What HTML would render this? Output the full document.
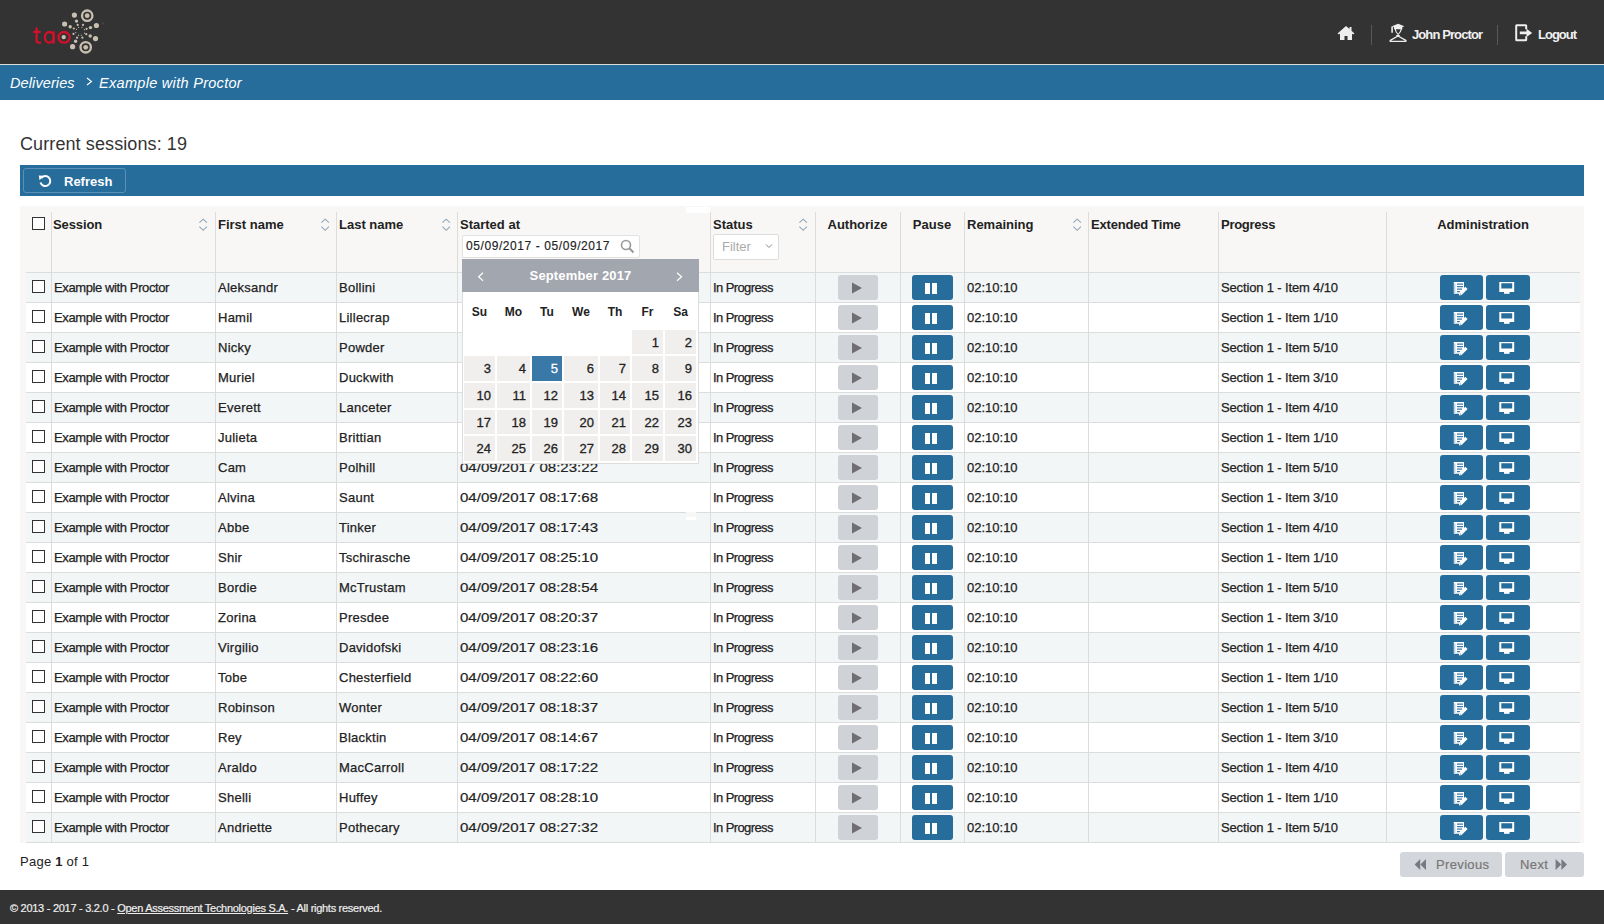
<!DOCTYPE html><html><head><meta charset="utf-8"><title>TAO Proctoring</title><style>
*{margin:0;padding:0;box-sizing:border-box}
html,body{width:1604px;height:924px;overflow:hidden;background:#fff;font-family:"Liberation Sans",sans-serif;color:#222}
.a{position:absolute}
.t{position:absolute;white-space:nowrap;font-size:13px;line-height:15px}
.sk{-webkit-text-stroke:0.25px #222}
.hdr{left:0;top:0;width:1604px;height:64px;background:#333}
.hline{left:0;top:64px;width:1604px;height:1px;background:#dcdcdc}
.bc{left:0;top:65px;width:1604px;height:35px;background:#266d9c}
.bct{color:#fff;font-style:italic;font-size:14.5px;line-height:17px}
.nav{color:#f0f0f0;font-weight:bold;font-size:13px;line-height:15px}
.vsep{width:1px;background:#5e5850}
.tbar{left:20px;top:165px;width:1564px;height:31px;background:#266d9c}
.rbtn{left:23px;top:168px;width:103px;height:25px;border:1px solid #5b8fb8;border-radius:3px}
.wrap{left:20px;top:206px;width:1564px;height:637px;background:#f8f7f5}
.row{left:26px;width:1554px;height:31px;border-top:1px solid #dcdcdc;border-bottom:1px solid #dcdcdc}
.odd{background:#f3f6f7}
.even{background:#fff}
.vl{width:1px;background:#dcdcdc}
.cb{width:13px;height:13px;border:1.5px solid #333;background:#fff}
.hd{font-weight:bold;font-size:13px;line-height:15px;color:#222}
.pbtn{width:40px;height:25px;background:#cfd2d6;border-radius:3px}
.pzbtn{width:41px;height:25px;background:#266d9c;border-radius:3px}
.abtn{height:25px;background:#266d9c;border-radius:3px}
.ftr{left:0;top:890px;width:1604px;height:34px;background:#333}
</style></head><body>
<div class="a hdr"></div><div class="a hline"></div><div class="a bc"></div>
<svg class="a" style="left:25px;top:5px" width="90" height="56" viewBox="25 5 90 56"><g fill="none" stroke="#d0112b" stroke-width="2.3"><path d="M36.6 27.6 V40.6 Q36.6 42.6 38.6 42.6 H41"/><path d="M33.3 31.9 H40.8"/><ellipse cx="49.3" cy="37.3" rx="4.4" ry="5.3"/><path d="M53.7 31.2 V43.7"/><ellipse cx="64.1" cy="37.3" rx="5.6" ry="5.3"/></g><circle cx="74.4" cy="15.1" r="2.6" fill="#c8bfb1"/><circle cx="64.6" cy="24" r="2.6" fill="#c8bfb1"/><circle cx="96.4" cy="25.5" r="2.6" fill="#c8bfb1"/><circle cx="95.5" cy="38.6" r="2.6" fill="#c8bfb1"/><circle cx="72.6" cy="46.7" r="2.6" fill="#c8bfb1"/><circle cx="76.5" cy="21.1" r="1.7" fill="#c8bfb1"/><circle cx="70.2" cy="26.7" r="1.7" fill="#c8bfb1"/><circle cx="90.5" cy="27.6" r="1.7" fill="#c8bfb1"/><circle cx="90.2" cy="36" r="1.7" fill="#c8bfb1"/><circle cx="75.6" cy="41.3" r="1.7" fill="#c8bfb1"/><circle cx="77.7" cy="24.9" r="1.1" fill="#c8bfb1"/><circle cx="83" cy="24.9" r="1.1" fill="#c8bfb1"/><circle cx="73.8" cy="28.5" r="1.1" fill="#c8bfb1"/><circle cx="86.6" cy="28.8" r="1.1" fill="#c8bfb1"/><circle cx="73.5" cy="33.9" r="1.1" fill="#c8bfb1"/><circle cx="86.3" cy="34.2" r="1.1" fill="#c8bfb1"/><circle cx="77.1" cy="37.7" r="1.1" fill="#c8bfb1"/><circle cx="82.4" cy="37.7" r="1.1" fill="#c8bfb1"/><circle cx="78.6" cy="27.3" r="0.6" fill="#c8bfb1"/><circle cx="82" cy="27.3" r="0.6" fill="#c8bfb1"/><circle cx="76.5" cy="29.3" r="0.6" fill="#c8bfb1"/><circle cx="84.5" cy="29.7" r="0.6" fill="#c8bfb1"/><circle cx="75.8" cy="32.6" r="0.6" fill="#c8bfb1"/><circle cx="84.5" cy="33.2" r="0.6" fill="#c8bfb1"/><circle cx="78.6" cy="35.2" r="0.6" fill="#c8bfb1"/><circle cx="81.3" cy="35.2" r="0.6" fill="#c8bfb1"/><circle cx="87.2" cy="15.7" r="5.2" fill="none" stroke="#c8bfb1" stroke-width="2.3"/><circle cx="87.2" cy="15.7" r="2.4" fill="#c8bfb1"/><circle cx="85.7" cy="47.3" r="5.2" fill="none" stroke="#c8bfb1" stroke-width="2.3"/><circle cx="85.7" cy="47.3" r="2.4" fill="#c8bfb1"/><circle cx="63.7" cy="37.1" r="2.2" fill="#c8bfb1"/><text x="101.5" y="25" fill="#6a6560" font-size="4" font-family="Liberation Sans">®</text></svg>
<svg class="a" style="left:1337px;top:25px" width="18" height="16" viewBox="0 0 18 16"><path d="M9 1 L0.5 8.5 L2 9.5 L3 8.6 V15 H7.5 V11 H10.5 V15 H15 V8.6 L16 9.5 L17.5 8.5 L14.5 5.8 V2 H12.5 V4 Z" fill="#eee"/></svg>
<div class="a vsep" style="left:1371px;top:25px;height:20px"></div>
<svg class="a" style="left:1385px;top:20px" width="27" height="26" viewBox="0 0 27 26"><path d="M6.8 6.2 L13.2 3.8 L19.3 6.2 L17.3 7.3 V9.3 H9 V7.3 Z" fill="#eee"/><path d="M7.1 6.5 V12.7" stroke="#eee" stroke-width="1.6"/><path d="M10.2 8.8 Q10.6 12.4 13.1 14.4 Q15.6 12.4 16.4 8.8" fill="none" stroke="#eee" stroke-width="1.2"/><path d="M11.2 15.5 H14.8" stroke="#eee" stroke-width="1"/><path d="M13 16 L5.3 20.4 Q4.5 21.3 5.6 21.4 H20.5 Q21.6 21.3 20.8 20.4 L13 16" fill="none" stroke="#eee" stroke-width="1.3" stroke-linejoin="round"/></svg>
<div class="t nav" style="left:1412px;top:27px;letter-spacing:-0.9px">John Proctor</div>
<div class="a vsep" style="left:1497px;top:25px;height:20px"></div>
<svg class="a" style="left:1515px;top:24px" width="18" height="18" viewBox="0 0 18 18"><path d="M11.2 5.2 V1.7 Q11.2 1.2 10.7 1.2 H1.7 Q1.2 1.2 1.2 1.7 V15.7 Q1.2 16.2 1.7 16.2 H10.7 Q11.2 16.2 11.2 15.7 V12.2" fill="none" stroke="#eee" stroke-width="2"/><path d="M4.8 7.6 H11.5 V4.8 L17.2 8.9 L11.5 13 V10.2 H4.8 Z" fill="#eee"/></svg>
<div class="t nav" style="left:1538px;top:27px;letter-spacing:-1px">Logout</div>
<div class="t bct" style="left:10px;top:75px;letter-spacing:0.1px">Deliveries</div>
<svg class="a" style="left:85px;top:77px" width="9" height="9" viewBox="0 0 9 9"><path d="M2 1 L6.5 4.5 L2 8" fill="none" stroke="#fff" stroke-width="1.1"/></svg>
<div class="t bct" style="left:99px;top:75px;letter-spacing:0.3px">Example with Proctor</div>
<div class="t" style="left:20px;top:134px;letter-spacing:0.1px;font-size:18px;line-height:21px;color:#333">Current sessions: 19</div>
<div class="a tbar"></div><div class="a rbtn"></div>
<svg class="a" style="left:38px;top:174px" width="14" height="14" viewBox="0 0 14 14"><path d="M3.2 4.2 A5 5 0 1 1 2.5 8.5" fill="none" stroke="#fff" stroke-width="2"/><path d="M0.8 1.5 L5.6 1.8 L1.5 6.2 Z" fill="#fff"/></svg>
<div class="t" style="left:64px;top:174px;font-weight:bold;color:#fff">Refresh</div>
<div class="a wrap"></div>
<div class="a vl" style="left:51px;top:212px;height:60px"></div>
<div class="a vl" style="left:215px;top:212px;height:60px"></div>
<div class="a vl" style="left:336px;top:212px;height:60px"></div>
<div class="a vl" style="left:457px;top:212px;height:60px"></div>
<div class="a vl" style="left:710px;top:212px;height:60px"></div>
<div class="a vl" style="left:815px;top:212px;height:60px"></div>
<div class="a vl" style="left:900px;top:212px;height:60px"></div>
<div class="a vl" style="left:964px;top:212px;height:60px"></div>
<div class="a vl" style="left:1088px;top:212px;height:60px"></div>
<div class="a vl" style="left:1218px;top:212px;height:60px"></div>
<div class="a vl" style="left:1386px;top:212px;height:60px"></div>
<div class="a cb" style="left:32px;top:217px"></div>
<div class="t hd" style="left:53px;top:217px;letter-spacing:-0.1px">Session</div>
<svg class="a" style="left:197px;top:218px" width="12" height="14" viewBox="0 0 12 14"><path d="M2.4 4.6 L6.2 1.1 L9.9 4.6 M2.4 8.6 L6.2 12.3 L9.9 8.6" fill="none" stroke="#8ea3b6" stroke-width="1.05"/></svg>
<div class="t hd" style="left:218px;top:217px;letter-spacing:0px">First name</div>
<svg class="a" style="left:319px;top:218px" width="12" height="14" viewBox="0 0 12 14"><path d="M2.4 4.6 L6.2 1.1 L9.9 4.6 M2.4 8.6 L6.2 12.3 L9.9 8.6" fill="none" stroke="#8ea3b6" stroke-width="1.05"/></svg>
<div class="t hd" style="left:339px;top:217px;letter-spacing:0px">Last name</div>
<svg class="a" style="left:440px;top:218px" width="12" height="14" viewBox="0 0 12 14"><path d="M2.4 4.6 L6.2 1.1 L9.9 4.6 M2.4 8.6 L6.2 12.3 L9.9 8.6" fill="none" stroke="#8ea3b6" stroke-width="1.05"/></svg>
<div class="t hd" style="left:460px;top:217px;letter-spacing:0px">Started at</div>
<div class="t hd" style="left:713px;top:217px;letter-spacing:0px">Status</div>
<svg class="a" style="left:797px;top:218px" width="12" height="14" viewBox="0 0 12 14"><path d="M2.4 4.6 L6.2 1.1 L9.9 4.6 M2.4 8.6 L6.2 12.3 L9.9 8.6" fill="none" stroke="#8ea3b6" stroke-width="1.05"/></svg>
<div class="t hd" style="left:815px;width:85px;text-align:center;top:217px">Authorize</div>
<div class="t hd" style="left:900px;width:64px;text-align:center;top:217px">Pause</div>
<div class="t hd" style="left:967px;top:217px;letter-spacing:0px">Remaining</div>
<svg class="a" style="left:1071px;top:218px" width="12" height="14" viewBox="0 0 12 14"><path d="M2.4 4.6 L6.2 1.1 L9.9 4.6 M2.4 8.6 L6.2 12.3 L9.9 8.6" fill="none" stroke="#8ea3b6" stroke-width="1.05"/></svg>
<div class="t hd" style="left:1091px;top:217px;letter-spacing:-0.2px">Extended Time</div>
<div class="t hd" style="left:1221px;top:217px;letter-spacing:-0.28px">Progress</div>
<div class="t hd" style="left:1386px;width:194px;text-align:center;top:217px">Administration</div>
<div class="a" style="left:462px;top:235px;width:178px;height:23px;background:#fff;border:1px solid #e2e2e2;border-radius:2px"></div>
<div class="t" style="left:466px;top:239px;font-size:12px;line-height:14px;letter-spacing:0.58px;-webkit-text-stroke:0.15px #222">05/09/2017 - 05/09/2017</div>
<svg class="a" style="left:620px;top:239px" width="15" height="15" viewBox="0 0 15 15"><circle cx="6" cy="6" r="4.5" fill="none" stroke="#999" stroke-width="1.6"/><path d="M9.3 9.3 L13.5 13.5" stroke="#999" stroke-width="2"/></svg>
<div class="a" style="left:713px;top:234px;width:66px;height:26px;background:#fff;border:1px solid #ddd;border-radius:2px"></div>
<div class="t" style="left:722px;top:239px;color:#aaa;font-size:13px">Filter</div>
<svg class="a" style="left:765px;top:243px" width="8" height="6" viewBox="0 0 8 6"><path d="M1 1.5 L4 4.5 L7 1.5" fill="none" stroke="#888" stroke-width="1"/></svg>
<div class="a row odd" style="top:272px"></div>
<div class="a row even" style="top:302px"></div>
<div class="a row odd" style="top:332px"></div>
<div class="a row even" style="top:362px"></div>
<div class="a row odd" style="top:392px"></div>
<div class="a row even" style="top:422px"></div>
<div class="a row odd" style="top:452px"></div>
<div class="a row even" style="top:482px"></div>
<div class="a row odd" style="top:512px"></div>
<div class="a row even" style="top:542px"></div>
<div class="a row odd" style="top:572px"></div>
<div class="a row even" style="top:602px"></div>
<div class="a row odd" style="top:632px"></div>
<div class="a row even" style="top:662px"></div>
<div class="a row odd" style="top:692px"></div>
<div class="a row even" style="top:722px"></div>
<div class="a row odd" style="top:752px"></div>
<div class="a row even" style="top:782px"></div>
<div class="a row odd" style="top:812px"></div>
<div class="a vl" style="left:51px;top:272px;height:571px"></div>
<div class="a vl" style="left:215px;top:272px;height:571px"></div>
<div class="a vl" style="left:336px;top:272px;height:571px"></div>
<div class="a vl" style="left:457px;top:272px;height:571px"></div>
<div class="a vl" style="left:710px;top:272px;height:571px"></div>
<div class="a vl" style="left:815px;top:272px;height:571px"></div>
<div class="a vl" style="left:900px;top:272px;height:571px"></div>
<div class="a vl" style="left:964px;top:272px;height:571px"></div>
<div class="a vl" style="left:1088px;top:272px;height:571px"></div>
<div class="a vl" style="left:1218px;top:272px;height:571px"></div>
<div class="a vl" style="left:1386px;top:272px;height:571px"></div>
<div class="a cb" style="left:32px;top:280px"></div>
<div class="t sk" style="left:54px;top:280px;letter-spacing:-0.39px">Example with Proctor</div>
<div class="t sk" style="left:218px;top:280px;letter-spacing:0.25px">Aleksandr</div>
<div class="t sk" style="left:339px;top:280px;letter-spacing:0.25px">Bollini</div>
<div class="t sk" style="left:713px;top:280px;letter-spacing:-0.6px">In Progress</div>
<div class="a pbtn" style="left:838px;top:275px"></div>
<svg class="a" style="left:851px;top:282px" width="12" height="12" viewBox="0 0 12 12"><path d="M1 0.5 L11 6 L1 11.5Z" fill="#6f6f73"/></svg>
<div class="a pzbtn" style="left:912px;top:275px"></div>
<div class="a" style="left:925px;top:283px;width:5px;height:11px;background:#fff"></div><div class="a" style="left:932px;top:283px;width:5px;height:11px;background:#fff"></div>
<div class="t sk" style="left:967px;top:280px">02:10:10</div>
<div class="t sk" style="left:1221px;top:280px;letter-spacing:-0.15px">Section 1 - Item 4/10</div>
<div class="a abtn" style="left:1440px;top:275px;width:43px"></div>
<svg class="a" style="left:1453px;top:282px" width="16" height="14" viewBox="0 0 16 14"><path d="M0.8 0 H11 V6.5 L7 11.8 H0.8Z" fill="#fff"/><path d="M4 2.2 H10 M4 4.7 H10 M4 7.2 H9 M4 9.7 H7" stroke="#3f7cab" stroke-width="1.2"/><path d="M1.8 1.5 V11" stroke="#8fb2cf" stroke-width="0.8"/><path d="M6.3 10.8 L12.3 4.8 L14.6 7.1 L8.6 13.1 L6 13.6Z" fill="#fff"/><circle cx="7.6" cy="12" r="0.6" fill="#5d8db3"/></svg>
<div class="a abtn" style="left:1486px;top:275px;width:44px"></div>
<svg class="a" style="left:1499px;top:282px" width="16" height="13" viewBox="0 0 16 13"><path d="M0.3 0 H15.2 V10 H0.3 Z M2.3 1.3 V6.4 H13.2 V1.3Z" fill="#fff" fill-rule="evenodd"/><path d="M5 10 H10.6 V11.8 H5Z" fill="#fff"/></svg>
<div class="a cb" style="left:32px;top:310px"></div>
<div class="t sk" style="left:54px;top:310px;letter-spacing:-0.39px">Example with Proctor</div>
<div class="t sk" style="left:218px;top:310px;letter-spacing:0.25px">Hamil</div>
<div class="t sk" style="left:339px;top:310px;letter-spacing:0.25px">Lillecrap</div>
<div class="t sk" style="left:713px;top:310px;letter-spacing:-0.6px">In Progress</div>
<div class="a pbtn" style="left:838px;top:305px"></div>
<svg class="a" style="left:851px;top:312px" width="12" height="12" viewBox="0 0 12 12"><path d="M1 0.5 L11 6 L1 11.5Z" fill="#6f6f73"/></svg>
<div class="a pzbtn" style="left:912px;top:305px"></div>
<div class="a" style="left:925px;top:313px;width:5px;height:11px;background:#fff"></div><div class="a" style="left:932px;top:313px;width:5px;height:11px;background:#fff"></div>
<div class="t sk" style="left:967px;top:310px">02:10:10</div>
<div class="t sk" style="left:1221px;top:310px;letter-spacing:-0.15px">Section 1 - Item 1/10</div>
<div class="a abtn" style="left:1440px;top:305px;width:43px"></div>
<svg class="a" style="left:1453px;top:312px" width="16" height="14" viewBox="0 0 16 14"><path d="M0.8 0 H11 V6.5 L7 11.8 H0.8Z" fill="#fff"/><path d="M4 2.2 H10 M4 4.7 H10 M4 7.2 H9 M4 9.7 H7" stroke="#3f7cab" stroke-width="1.2"/><path d="M1.8 1.5 V11" stroke="#8fb2cf" stroke-width="0.8"/><path d="M6.3 10.8 L12.3 4.8 L14.6 7.1 L8.6 13.1 L6 13.6Z" fill="#fff"/><circle cx="7.6" cy="12" r="0.6" fill="#5d8db3"/></svg>
<div class="a abtn" style="left:1486px;top:305px;width:44px"></div>
<svg class="a" style="left:1499px;top:312px" width="16" height="13" viewBox="0 0 16 13"><path d="M0.3 0 H15.2 V10 H0.3 Z M2.3 1.3 V6.4 H13.2 V1.3Z" fill="#fff" fill-rule="evenodd"/><path d="M5 10 H10.6 V11.8 H5Z" fill="#fff"/></svg>
<div class="a cb" style="left:32px;top:340px"></div>
<div class="t sk" style="left:54px;top:340px;letter-spacing:-0.39px">Example with Proctor</div>
<div class="t sk" style="left:218px;top:340px;letter-spacing:0.25px">Nicky</div>
<div class="t sk" style="left:339px;top:340px;letter-spacing:0.25px">Powder</div>
<div class="t sk" style="left:713px;top:340px;letter-spacing:-0.6px">In Progress</div>
<div class="a pbtn" style="left:838px;top:335px"></div>
<svg class="a" style="left:851px;top:342px" width="12" height="12" viewBox="0 0 12 12"><path d="M1 0.5 L11 6 L1 11.5Z" fill="#6f6f73"/></svg>
<div class="a pzbtn" style="left:912px;top:335px"></div>
<div class="a" style="left:925px;top:343px;width:5px;height:11px;background:#fff"></div><div class="a" style="left:932px;top:343px;width:5px;height:11px;background:#fff"></div>
<div class="t sk" style="left:967px;top:340px">02:10:10</div>
<div class="t sk" style="left:1221px;top:340px;letter-spacing:-0.15px">Section 1 - Item 5/10</div>
<div class="a abtn" style="left:1440px;top:335px;width:43px"></div>
<svg class="a" style="left:1453px;top:342px" width="16" height="14" viewBox="0 0 16 14"><path d="M0.8 0 H11 V6.5 L7 11.8 H0.8Z" fill="#fff"/><path d="M4 2.2 H10 M4 4.7 H10 M4 7.2 H9 M4 9.7 H7" stroke="#3f7cab" stroke-width="1.2"/><path d="M1.8 1.5 V11" stroke="#8fb2cf" stroke-width="0.8"/><path d="M6.3 10.8 L12.3 4.8 L14.6 7.1 L8.6 13.1 L6 13.6Z" fill="#fff"/><circle cx="7.6" cy="12" r="0.6" fill="#5d8db3"/></svg>
<div class="a abtn" style="left:1486px;top:335px;width:44px"></div>
<svg class="a" style="left:1499px;top:342px" width="16" height="13" viewBox="0 0 16 13"><path d="M0.3 0 H15.2 V10 H0.3 Z M2.3 1.3 V6.4 H13.2 V1.3Z" fill="#fff" fill-rule="evenodd"/><path d="M5 10 H10.6 V11.8 H5Z" fill="#fff"/></svg>
<div class="a cb" style="left:32px;top:370px"></div>
<div class="t sk" style="left:54px;top:370px;letter-spacing:-0.39px">Example with Proctor</div>
<div class="t sk" style="left:218px;top:370px;letter-spacing:0.25px">Muriel</div>
<div class="t sk" style="left:339px;top:370px;letter-spacing:0.25px">Duckwith</div>
<div class="t sk" style="left:713px;top:370px;letter-spacing:-0.6px">In Progress</div>
<div class="a pbtn" style="left:838px;top:365px"></div>
<svg class="a" style="left:851px;top:372px" width="12" height="12" viewBox="0 0 12 12"><path d="M1 0.5 L11 6 L1 11.5Z" fill="#6f6f73"/></svg>
<div class="a pzbtn" style="left:912px;top:365px"></div>
<div class="a" style="left:925px;top:373px;width:5px;height:11px;background:#fff"></div><div class="a" style="left:932px;top:373px;width:5px;height:11px;background:#fff"></div>
<div class="t sk" style="left:967px;top:370px">02:10:10</div>
<div class="t sk" style="left:1221px;top:370px;letter-spacing:-0.15px">Section 1 - Item 3/10</div>
<div class="a abtn" style="left:1440px;top:365px;width:43px"></div>
<svg class="a" style="left:1453px;top:372px" width="16" height="14" viewBox="0 0 16 14"><path d="M0.8 0 H11 V6.5 L7 11.8 H0.8Z" fill="#fff"/><path d="M4 2.2 H10 M4 4.7 H10 M4 7.2 H9 M4 9.7 H7" stroke="#3f7cab" stroke-width="1.2"/><path d="M1.8 1.5 V11" stroke="#8fb2cf" stroke-width="0.8"/><path d="M6.3 10.8 L12.3 4.8 L14.6 7.1 L8.6 13.1 L6 13.6Z" fill="#fff"/><circle cx="7.6" cy="12" r="0.6" fill="#5d8db3"/></svg>
<div class="a abtn" style="left:1486px;top:365px;width:44px"></div>
<svg class="a" style="left:1499px;top:372px" width="16" height="13" viewBox="0 0 16 13"><path d="M0.3 0 H15.2 V10 H0.3 Z M2.3 1.3 V6.4 H13.2 V1.3Z" fill="#fff" fill-rule="evenodd"/><path d="M5 10 H10.6 V11.8 H5Z" fill="#fff"/></svg>
<div class="a cb" style="left:32px;top:400px"></div>
<div class="t sk" style="left:54px;top:400px;letter-spacing:-0.39px">Example with Proctor</div>
<div class="t sk" style="left:218px;top:400px;letter-spacing:0.25px">Everett</div>
<div class="t sk" style="left:339px;top:400px;letter-spacing:0.25px">Lanceter</div>
<div class="t sk" style="left:713px;top:400px;letter-spacing:-0.6px">In Progress</div>
<div class="a pbtn" style="left:838px;top:395px"></div>
<svg class="a" style="left:851px;top:402px" width="12" height="12" viewBox="0 0 12 12"><path d="M1 0.5 L11 6 L1 11.5Z" fill="#6f6f73"/></svg>
<div class="a pzbtn" style="left:912px;top:395px"></div>
<div class="a" style="left:925px;top:403px;width:5px;height:11px;background:#fff"></div><div class="a" style="left:932px;top:403px;width:5px;height:11px;background:#fff"></div>
<div class="t sk" style="left:967px;top:400px">02:10:10</div>
<div class="t sk" style="left:1221px;top:400px;letter-spacing:-0.15px">Section 1 - Item 4/10</div>
<div class="a abtn" style="left:1440px;top:395px;width:43px"></div>
<svg class="a" style="left:1453px;top:402px" width="16" height="14" viewBox="0 0 16 14"><path d="M0.8 0 H11 V6.5 L7 11.8 H0.8Z" fill="#fff"/><path d="M4 2.2 H10 M4 4.7 H10 M4 7.2 H9 M4 9.7 H7" stroke="#3f7cab" stroke-width="1.2"/><path d="M1.8 1.5 V11" stroke="#8fb2cf" stroke-width="0.8"/><path d="M6.3 10.8 L12.3 4.8 L14.6 7.1 L8.6 13.1 L6 13.6Z" fill="#fff"/><circle cx="7.6" cy="12" r="0.6" fill="#5d8db3"/></svg>
<div class="a abtn" style="left:1486px;top:395px;width:44px"></div>
<svg class="a" style="left:1499px;top:402px" width="16" height="13" viewBox="0 0 16 13"><path d="M0.3 0 H15.2 V10 H0.3 Z M2.3 1.3 V6.4 H13.2 V1.3Z" fill="#fff" fill-rule="evenodd"/><path d="M5 10 H10.6 V11.8 H5Z" fill="#fff"/></svg>
<div class="a cb" style="left:32px;top:430px"></div>
<div class="t sk" style="left:54px;top:430px;letter-spacing:-0.39px">Example with Proctor</div>
<div class="t sk" style="left:218px;top:430px;letter-spacing:0.25px">Julieta</div>
<div class="t sk" style="left:339px;top:430px;letter-spacing:0.25px">Brittian</div>
<div class="t sk" style="left:713px;top:430px;letter-spacing:-0.6px">In Progress</div>
<div class="a pbtn" style="left:838px;top:425px"></div>
<svg class="a" style="left:851px;top:432px" width="12" height="12" viewBox="0 0 12 12"><path d="M1 0.5 L11 6 L1 11.5Z" fill="#6f6f73"/></svg>
<div class="a pzbtn" style="left:912px;top:425px"></div>
<div class="a" style="left:925px;top:433px;width:5px;height:11px;background:#fff"></div><div class="a" style="left:932px;top:433px;width:5px;height:11px;background:#fff"></div>
<div class="t sk" style="left:967px;top:430px">02:10:10</div>
<div class="t sk" style="left:1221px;top:430px;letter-spacing:-0.15px">Section 1 - Item 1/10</div>
<div class="a abtn" style="left:1440px;top:425px;width:43px"></div>
<svg class="a" style="left:1453px;top:432px" width="16" height="14" viewBox="0 0 16 14"><path d="M0.8 0 H11 V6.5 L7 11.8 H0.8Z" fill="#fff"/><path d="M4 2.2 H10 M4 4.7 H10 M4 7.2 H9 M4 9.7 H7" stroke="#3f7cab" stroke-width="1.2"/><path d="M1.8 1.5 V11" stroke="#8fb2cf" stroke-width="0.8"/><path d="M6.3 10.8 L12.3 4.8 L14.6 7.1 L8.6 13.1 L6 13.6Z" fill="#fff"/><circle cx="7.6" cy="12" r="0.6" fill="#5d8db3"/></svg>
<div class="a abtn" style="left:1486px;top:425px;width:44px"></div>
<svg class="a" style="left:1499px;top:432px" width="16" height="13" viewBox="0 0 16 13"><path d="M0.3 0 H15.2 V10 H0.3 Z M2.3 1.3 V6.4 H13.2 V1.3Z" fill="#fff" fill-rule="evenodd"/><path d="M5 10 H10.6 V11.8 H5Z" fill="#fff"/></svg>
<div class="a cb" style="left:32px;top:460px"></div>
<div class="t sk" style="left:54px;top:460px;letter-spacing:-0.39px">Example with Proctor</div>
<div class="t sk" style="left:218px;top:460px;letter-spacing:0.25px">Cam</div>
<div class="t sk" style="left:339px;top:460px;letter-spacing:0.25px">Polhill</div>
<div class="t" style="left:460px;top:460px;transform:scaleX(1.157);transform-origin:0 0;-webkit-text-stroke:0.2px #222">04/09/2017 08:23:22</div>
<div class="t sk" style="left:713px;top:460px;letter-spacing:-0.6px">In Progress</div>
<div class="a pbtn" style="left:838px;top:455px"></div>
<svg class="a" style="left:851px;top:462px" width="12" height="12" viewBox="0 0 12 12"><path d="M1 0.5 L11 6 L1 11.5Z" fill="#6f6f73"/></svg>
<div class="a pzbtn" style="left:912px;top:455px"></div>
<div class="a" style="left:925px;top:463px;width:5px;height:11px;background:#fff"></div><div class="a" style="left:932px;top:463px;width:5px;height:11px;background:#fff"></div>
<div class="t sk" style="left:967px;top:460px">02:10:10</div>
<div class="t sk" style="left:1221px;top:460px;letter-spacing:-0.15px">Section 1 - Item 5/10</div>
<div class="a abtn" style="left:1440px;top:455px;width:43px"></div>
<svg class="a" style="left:1453px;top:462px" width="16" height="14" viewBox="0 0 16 14"><path d="M0.8 0 H11 V6.5 L7 11.8 H0.8Z" fill="#fff"/><path d="M4 2.2 H10 M4 4.7 H10 M4 7.2 H9 M4 9.7 H7" stroke="#3f7cab" stroke-width="1.2"/><path d="M1.8 1.5 V11" stroke="#8fb2cf" stroke-width="0.8"/><path d="M6.3 10.8 L12.3 4.8 L14.6 7.1 L8.6 13.1 L6 13.6Z" fill="#fff"/><circle cx="7.6" cy="12" r="0.6" fill="#5d8db3"/></svg>
<div class="a abtn" style="left:1486px;top:455px;width:44px"></div>
<svg class="a" style="left:1499px;top:462px" width="16" height="13" viewBox="0 0 16 13"><path d="M0.3 0 H15.2 V10 H0.3 Z M2.3 1.3 V6.4 H13.2 V1.3Z" fill="#fff" fill-rule="evenodd"/><path d="M5 10 H10.6 V11.8 H5Z" fill="#fff"/></svg>
<div class="a cb" style="left:32px;top:490px"></div>
<div class="t sk" style="left:54px;top:490px;letter-spacing:-0.39px">Example with Proctor</div>
<div class="t sk" style="left:218px;top:490px;letter-spacing:0.25px">Alvina</div>
<div class="t sk" style="left:339px;top:490px;letter-spacing:0.25px">Saunt</div>
<div class="t" style="left:460px;top:490px;transform:scaleX(1.157);transform-origin:0 0;-webkit-text-stroke:0.2px #222">04/09/2017 08:17:68</div>
<div class="t sk" style="left:713px;top:490px;letter-spacing:-0.6px">In Progress</div>
<div class="a pbtn" style="left:838px;top:485px"></div>
<svg class="a" style="left:851px;top:492px" width="12" height="12" viewBox="0 0 12 12"><path d="M1 0.5 L11 6 L1 11.5Z" fill="#6f6f73"/></svg>
<div class="a pzbtn" style="left:912px;top:485px"></div>
<div class="a" style="left:925px;top:493px;width:5px;height:11px;background:#fff"></div><div class="a" style="left:932px;top:493px;width:5px;height:11px;background:#fff"></div>
<div class="t sk" style="left:967px;top:490px">02:10:10</div>
<div class="t sk" style="left:1221px;top:490px;letter-spacing:-0.15px">Section 1 - Item 3/10</div>
<div class="a abtn" style="left:1440px;top:485px;width:43px"></div>
<svg class="a" style="left:1453px;top:492px" width="16" height="14" viewBox="0 0 16 14"><path d="M0.8 0 H11 V6.5 L7 11.8 H0.8Z" fill="#fff"/><path d="M4 2.2 H10 M4 4.7 H10 M4 7.2 H9 M4 9.7 H7" stroke="#3f7cab" stroke-width="1.2"/><path d="M1.8 1.5 V11" stroke="#8fb2cf" stroke-width="0.8"/><path d="M6.3 10.8 L12.3 4.8 L14.6 7.1 L8.6 13.1 L6 13.6Z" fill="#fff"/><circle cx="7.6" cy="12" r="0.6" fill="#5d8db3"/></svg>
<div class="a abtn" style="left:1486px;top:485px;width:44px"></div>
<svg class="a" style="left:1499px;top:492px" width="16" height="13" viewBox="0 0 16 13"><path d="M0.3 0 H15.2 V10 H0.3 Z M2.3 1.3 V6.4 H13.2 V1.3Z" fill="#fff" fill-rule="evenodd"/><path d="M5 10 H10.6 V11.8 H5Z" fill="#fff"/></svg>
<div class="a cb" style="left:32px;top:520px"></div>
<div class="t sk" style="left:54px;top:520px;letter-spacing:-0.39px">Example with Proctor</div>
<div class="t sk" style="left:218px;top:520px;letter-spacing:0.25px">Abbe</div>
<div class="t sk" style="left:339px;top:520px;letter-spacing:0.25px">Tinker</div>
<div class="t" style="left:460px;top:520px;transform:scaleX(1.157);transform-origin:0 0;-webkit-text-stroke:0.2px #222">04/09/2017 08:17:43</div>
<div class="t sk" style="left:713px;top:520px;letter-spacing:-0.6px">In Progress</div>
<div class="a pbtn" style="left:838px;top:515px"></div>
<svg class="a" style="left:851px;top:522px" width="12" height="12" viewBox="0 0 12 12"><path d="M1 0.5 L11 6 L1 11.5Z" fill="#6f6f73"/></svg>
<div class="a pzbtn" style="left:912px;top:515px"></div>
<div class="a" style="left:925px;top:523px;width:5px;height:11px;background:#fff"></div><div class="a" style="left:932px;top:523px;width:5px;height:11px;background:#fff"></div>
<div class="t sk" style="left:967px;top:520px">02:10:10</div>
<div class="t sk" style="left:1221px;top:520px;letter-spacing:-0.15px">Section 1 - Item 4/10</div>
<div class="a abtn" style="left:1440px;top:515px;width:43px"></div>
<svg class="a" style="left:1453px;top:522px" width="16" height="14" viewBox="0 0 16 14"><path d="M0.8 0 H11 V6.5 L7 11.8 H0.8Z" fill="#fff"/><path d="M4 2.2 H10 M4 4.7 H10 M4 7.2 H9 M4 9.7 H7" stroke="#3f7cab" stroke-width="1.2"/><path d="M1.8 1.5 V11" stroke="#8fb2cf" stroke-width="0.8"/><path d="M6.3 10.8 L12.3 4.8 L14.6 7.1 L8.6 13.1 L6 13.6Z" fill="#fff"/><circle cx="7.6" cy="12" r="0.6" fill="#5d8db3"/></svg>
<div class="a abtn" style="left:1486px;top:515px;width:44px"></div>
<svg class="a" style="left:1499px;top:522px" width="16" height="13" viewBox="0 0 16 13"><path d="M0.3 0 H15.2 V10 H0.3 Z M2.3 1.3 V6.4 H13.2 V1.3Z" fill="#fff" fill-rule="evenodd"/><path d="M5 10 H10.6 V11.8 H5Z" fill="#fff"/></svg>
<div class="a cb" style="left:32px;top:550px"></div>
<div class="t sk" style="left:54px;top:550px;letter-spacing:-0.39px">Example with Proctor</div>
<div class="t sk" style="left:218px;top:550px;letter-spacing:0.25px">Shir</div>
<div class="t sk" style="left:339px;top:550px;letter-spacing:0.25px">Tschirasche</div>
<div class="t" style="left:460px;top:550px;transform:scaleX(1.157);transform-origin:0 0;-webkit-text-stroke:0.2px #222">04/09/2017 08:25:10</div>
<div class="t sk" style="left:713px;top:550px;letter-spacing:-0.6px">In Progress</div>
<div class="a pbtn" style="left:838px;top:545px"></div>
<svg class="a" style="left:851px;top:552px" width="12" height="12" viewBox="0 0 12 12"><path d="M1 0.5 L11 6 L1 11.5Z" fill="#6f6f73"/></svg>
<div class="a pzbtn" style="left:912px;top:545px"></div>
<div class="a" style="left:925px;top:553px;width:5px;height:11px;background:#fff"></div><div class="a" style="left:932px;top:553px;width:5px;height:11px;background:#fff"></div>
<div class="t sk" style="left:967px;top:550px">02:10:10</div>
<div class="t sk" style="left:1221px;top:550px;letter-spacing:-0.15px">Section 1 - Item 1/10</div>
<div class="a abtn" style="left:1440px;top:545px;width:43px"></div>
<svg class="a" style="left:1453px;top:552px" width="16" height="14" viewBox="0 0 16 14"><path d="M0.8 0 H11 V6.5 L7 11.8 H0.8Z" fill="#fff"/><path d="M4 2.2 H10 M4 4.7 H10 M4 7.2 H9 M4 9.7 H7" stroke="#3f7cab" stroke-width="1.2"/><path d="M1.8 1.5 V11" stroke="#8fb2cf" stroke-width="0.8"/><path d="M6.3 10.8 L12.3 4.8 L14.6 7.1 L8.6 13.1 L6 13.6Z" fill="#fff"/><circle cx="7.6" cy="12" r="0.6" fill="#5d8db3"/></svg>
<div class="a abtn" style="left:1486px;top:545px;width:44px"></div>
<svg class="a" style="left:1499px;top:552px" width="16" height="13" viewBox="0 0 16 13"><path d="M0.3 0 H15.2 V10 H0.3 Z M2.3 1.3 V6.4 H13.2 V1.3Z" fill="#fff" fill-rule="evenodd"/><path d="M5 10 H10.6 V11.8 H5Z" fill="#fff"/></svg>
<div class="a cb" style="left:32px;top:580px"></div>
<div class="t sk" style="left:54px;top:580px;letter-spacing:-0.39px">Example with Proctor</div>
<div class="t sk" style="left:218px;top:580px;letter-spacing:0.25px">Bordie</div>
<div class="t sk" style="left:339px;top:580px;letter-spacing:0.25px">McTrustam</div>
<div class="t" style="left:460px;top:580px;transform:scaleX(1.157);transform-origin:0 0;-webkit-text-stroke:0.2px #222">04/09/2017 08:28:54</div>
<div class="t sk" style="left:713px;top:580px;letter-spacing:-0.6px">In Progress</div>
<div class="a pbtn" style="left:838px;top:575px"></div>
<svg class="a" style="left:851px;top:582px" width="12" height="12" viewBox="0 0 12 12"><path d="M1 0.5 L11 6 L1 11.5Z" fill="#6f6f73"/></svg>
<div class="a pzbtn" style="left:912px;top:575px"></div>
<div class="a" style="left:925px;top:583px;width:5px;height:11px;background:#fff"></div><div class="a" style="left:932px;top:583px;width:5px;height:11px;background:#fff"></div>
<div class="t sk" style="left:967px;top:580px">02:10:10</div>
<div class="t sk" style="left:1221px;top:580px;letter-spacing:-0.15px">Section 1 - Item 5/10</div>
<div class="a abtn" style="left:1440px;top:575px;width:43px"></div>
<svg class="a" style="left:1453px;top:582px" width="16" height="14" viewBox="0 0 16 14"><path d="M0.8 0 H11 V6.5 L7 11.8 H0.8Z" fill="#fff"/><path d="M4 2.2 H10 M4 4.7 H10 M4 7.2 H9 M4 9.7 H7" stroke="#3f7cab" stroke-width="1.2"/><path d="M1.8 1.5 V11" stroke="#8fb2cf" stroke-width="0.8"/><path d="M6.3 10.8 L12.3 4.8 L14.6 7.1 L8.6 13.1 L6 13.6Z" fill="#fff"/><circle cx="7.6" cy="12" r="0.6" fill="#5d8db3"/></svg>
<div class="a abtn" style="left:1486px;top:575px;width:44px"></div>
<svg class="a" style="left:1499px;top:582px" width="16" height="13" viewBox="0 0 16 13"><path d="M0.3 0 H15.2 V10 H0.3 Z M2.3 1.3 V6.4 H13.2 V1.3Z" fill="#fff" fill-rule="evenodd"/><path d="M5 10 H10.6 V11.8 H5Z" fill="#fff"/></svg>
<div class="a cb" style="left:32px;top:610px"></div>
<div class="t sk" style="left:54px;top:610px;letter-spacing:-0.39px">Example with Proctor</div>
<div class="t sk" style="left:218px;top:610px;letter-spacing:0.25px">Zorina</div>
<div class="t sk" style="left:339px;top:610px;letter-spacing:0.25px">Presdee</div>
<div class="t" style="left:460px;top:610px;transform:scaleX(1.157);transform-origin:0 0;-webkit-text-stroke:0.2px #222">04/09/2017 08:20:37</div>
<div class="t sk" style="left:713px;top:610px;letter-spacing:-0.6px">In Progress</div>
<div class="a pbtn" style="left:838px;top:605px"></div>
<svg class="a" style="left:851px;top:612px" width="12" height="12" viewBox="0 0 12 12"><path d="M1 0.5 L11 6 L1 11.5Z" fill="#6f6f73"/></svg>
<div class="a pzbtn" style="left:912px;top:605px"></div>
<div class="a" style="left:925px;top:613px;width:5px;height:11px;background:#fff"></div><div class="a" style="left:932px;top:613px;width:5px;height:11px;background:#fff"></div>
<div class="t sk" style="left:967px;top:610px">02:10:10</div>
<div class="t sk" style="left:1221px;top:610px;letter-spacing:-0.15px">Section 1 - Item 3/10</div>
<div class="a abtn" style="left:1440px;top:605px;width:43px"></div>
<svg class="a" style="left:1453px;top:612px" width="16" height="14" viewBox="0 0 16 14"><path d="M0.8 0 H11 V6.5 L7 11.8 H0.8Z" fill="#fff"/><path d="M4 2.2 H10 M4 4.7 H10 M4 7.2 H9 M4 9.7 H7" stroke="#3f7cab" stroke-width="1.2"/><path d="M1.8 1.5 V11" stroke="#8fb2cf" stroke-width="0.8"/><path d="M6.3 10.8 L12.3 4.8 L14.6 7.1 L8.6 13.1 L6 13.6Z" fill="#fff"/><circle cx="7.6" cy="12" r="0.6" fill="#5d8db3"/></svg>
<div class="a abtn" style="left:1486px;top:605px;width:44px"></div>
<svg class="a" style="left:1499px;top:612px" width="16" height="13" viewBox="0 0 16 13"><path d="M0.3 0 H15.2 V10 H0.3 Z M2.3 1.3 V6.4 H13.2 V1.3Z" fill="#fff" fill-rule="evenodd"/><path d="M5 10 H10.6 V11.8 H5Z" fill="#fff"/></svg>
<div class="a cb" style="left:32px;top:640px"></div>
<div class="t sk" style="left:54px;top:640px;letter-spacing:-0.39px">Example with Proctor</div>
<div class="t sk" style="left:218px;top:640px;letter-spacing:0.25px">Virgilio</div>
<div class="t sk" style="left:339px;top:640px;letter-spacing:0.25px">Davidofski</div>
<div class="t" style="left:460px;top:640px;transform:scaleX(1.157);transform-origin:0 0;-webkit-text-stroke:0.2px #222">04/09/2017 08:23:16</div>
<div class="t sk" style="left:713px;top:640px;letter-spacing:-0.6px">In Progress</div>
<div class="a pbtn" style="left:838px;top:635px"></div>
<svg class="a" style="left:851px;top:642px" width="12" height="12" viewBox="0 0 12 12"><path d="M1 0.5 L11 6 L1 11.5Z" fill="#6f6f73"/></svg>
<div class="a pzbtn" style="left:912px;top:635px"></div>
<div class="a" style="left:925px;top:643px;width:5px;height:11px;background:#fff"></div><div class="a" style="left:932px;top:643px;width:5px;height:11px;background:#fff"></div>
<div class="t sk" style="left:967px;top:640px">02:10:10</div>
<div class="t sk" style="left:1221px;top:640px;letter-spacing:-0.15px">Section 1 - Item 4/10</div>
<div class="a abtn" style="left:1440px;top:635px;width:43px"></div>
<svg class="a" style="left:1453px;top:642px" width="16" height="14" viewBox="0 0 16 14"><path d="M0.8 0 H11 V6.5 L7 11.8 H0.8Z" fill="#fff"/><path d="M4 2.2 H10 M4 4.7 H10 M4 7.2 H9 M4 9.7 H7" stroke="#3f7cab" stroke-width="1.2"/><path d="M1.8 1.5 V11" stroke="#8fb2cf" stroke-width="0.8"/><path d="M6.3 10.8 L12.3 4.8 L14.6 7.1 L8.6 13.1 L6 13.6Z" fill="#fff"/><circle cx="7.6" cy="12" r="0.6" fill="#5d8db3"/></svg>
<div class="a abtn" style="left:1486px;top:635px;width:44px"></div>
<svg class="a" style="left:1499px;top:642px" width="16" height="13" viewBox="0 0 16 13"><path d="M0.3 0 H15.2 V10 H0.3 Z M2.3 1.3 V6.4 H13.2 V1.3Z" fill="#fff" fill-rule="evenodd"/><path d="M5 10 H10.6 V11.8 H5Z" fill="#fff"/></svg>
<div class="a cb" style="left:32px;top:670px"></div>
<div class="t sk" style="left:54px;top:670px;letter-spacing:-0.39px">Example with Proctor</div>
<div class="t sk" style="left:218px;top:670px;letter-spacing:0.25px">Tobe</div>
<div class="t sk" style="left:339px;top:670px;letter-spacing:0.25px">Chesterfield</div>
<div class="t" style="left:460px;top:670px;transform:scaleX(1.157);transform-origin:0 0;-webkit-text-stroke:0.2px #222">04/09/2017 08:22:60</div>
<div class="t sk" style="left:713px;top:670px;letter-spacing:-0.6px">In Progress</div>
<div class="a pbtn" style="left:838px;top:665px"></div>
<svg class="a" style="left:851px;top:672px" width="12" height="12" viewBox="0 0 12 12"><path d="M1 0.5 L11 6 L1 11.5Z" fill="#6f6f73"/></svg>
<div class="a pzbtn" style="left:912px;top:665px"></div>
<div class="a" style="left:925px;top:673px;width:5px;height:11px;background:#fff"></div><div class="a" style="left:932px;top:673px;width:5px;height:11px;background:#fff"></div>
<div class="t sk" style="left:967px;top:670px">02:10:10</div>
<div class="t sk" style="left:1221px;top:670px;letter-spacing:-0.15px">Section 1 - Item 1/10</div>
<div class="a abtn" style="left:1440px;top:665px;width:43px"></div>
<svg class="a" style="left:1453px;top:672px" width="16" height="14" viewBox="0 0 16 14"><path d="M0.8 0 H11 V6.5 L7 11.8 H0.8Z" fill="#fff"/><path d="M4 2.2 H10 M4 4.7 H10 M4 7.2 H9 M4 9.7 H7" stroke="#3f7cab" stroke-width="1.2"/><path d="M1.8 1.5 V11" stroke="#8fb2cf" stroke-width="0.8"/><path d="M6.3 10.8 L12.3 4.8 L14.6 7.1 L8.6 13.1 L6 13.6Z" fill="#fff"/><circle cx="7.6" cy="12" r="0.6" fill="#5d8db3"/></svg>
<div class="a abtn" style="left:1486px;top:665px;width:44px"></div>
<svg class="a" style="left:1499px;top:672px" width="16" height="13" viewBox="0 0 16 13"><path d="M0.3 0 H15.2 V10 H0.3 Z M2.3 1.3 V6.4 H13.2 V1.3Z" fill="#fff" fill-rule="evenodd"/><path d="M5 10 H10.6 V11.8 H5Z" fill="#fff"/></svg>
<div class="a cb" style="left:32px;top:700px"></div>
<div class="t sk" style="left:54px;top:700px;letter-spacing:-0.39px">Example with Proctor</div>
<div class="t sk" style="left:218px;top:700px;letter-spacing:0.25px">Robinson</div>
<div class="t sk" style="left:339px;top:700px;letter-spacing:0.25px">Wonter</div>
<div class="t" style="left:460px;top:700px;transform:scaleX(1.157);transform-origin:0 0;-webkit-text-stroke:0.2px #222">04/09/2017 08:18:37</div>
<div class="t sk" style="left:713px;top:700px;letter-spacing:-0.6px">In Progress</div>
<div class="a pbtn" style="left:838px;top:695px"></div>
<svg class="a" style="left:851px;top:702px" width="12" height="12" viewBox="0 0 12 12"><path d="M1 0.5 L11 6 L1 11.5Z" fill="#6f6f73"/></svg>
<div class="a pzbtn" style="left:912px;top:695px"></div>
<div class="a" style="left:925px;top:703px;width:5px;height:11px;background:#fff"></div><div class="a" style="left:932px;top:703px;width:5px;height:11px;background:#fff"></div>
<div class="t sk" style="left:967px;top:700px">02:10:10</div>
<div class="t sk" style="left:1221px;top:700px;letter-spacing:-0.15px">Section 1 - Item 5/10</div>
<div class="a abtn" style="left:1440px;top:695px;width:43px"></div>
<svg class="a" style="left:1453px;top:702px" width="16" height="14" viewBox="0 0 16 14"><path d="M0.8 0 H11 V6.5 L7 11.8 H0.8Z" fill="#fff"/><path d="M4 2.2 H10 M4 4.7 H10 M4 7.2 H9 M4 9.7 H7" stroke="#3f7cab" stroke-width="1.2"/><path d="M1.8 1.5 V11" stroke="#8fb2cf" stroke-width="0.8"/><path d="M6.3 10.8 L12.3 4.8 L14.6 7.1 L8.6 13.1 L6 13.6Z" fill="#fff"/><circle cx="7.6" cy="12" r="0.6" fill="#5d8db3"/></svg>
<div class="a abtn" style="left:1486px;top:695px;width:44px"></div>
<svg class="a" style="left:1499px;top:702px" width="16" height="13" viewBox="0 0 16 13"><path d="M0.3 0 H15.2 V10 H0.3 Z M2.3 1.3 V6.4 H13.2 V1.3Z" fill="#fff" fill-rule="evenodd"/><path d="M5 10 H10.6 V11.8 H5Z" fill="#fff"/></svg>
<div class="a cb" style="left:32px;top:730px"></div>
<div class="t sk" style="left:54px;top:730px;letter-spacing:-0.39px">Example with Proctor</div>
<div class="t sk" style="left:218px;top:730px;letter-spacing:0.25px">Rey</div>
<div class="t sk" style="left:339px;top:730px;letter-spacing:0.25px">Blacktin</div>
<div class="t" style="left:460px;top:730px;transform:scaleX(1.157);transform-origin:0 0;-webkit-text-stroke:0.2px #222">04/09/2017 08:14:67</div>
<div class="t sk" style="left:713px;top:730px;letter-spacing:-0.6px">In Progress</div>
<div class="a pbtn" style="left:838px;top:725px"></div>
<svg class="a" style="left:851px;top:732px" width="12" height="12" viewBox="0 0 12 12"><path d="M1 0.5 L11 6 L1 11.5Z" fill="#6f6f73"/></svg>
<div class="a pzbtn" style="left:912px;top:725px"></div>
<div class="a" style="left:925px;top:733px;width:5px;height:11px;background:#fff"></div><div class="a" style="left:932px;top:733px;width:5px;height:11px;background:#fff"></div>
<div class="t sk" style="left:967px;top:730px">02:10:10</div>
<div class="t sk" style="left:1221px;top:730px;letter-spacing:-0.15px">Section 1 - Item 3/10</div>
<div class="a abtn" style="left:1440px;top:725px;width:43px"></div>
<svg class="a" style="left:1453px;top:732px" width="16" height="14" viewBox="0 0 16 14"><path d="M0.8 0 H11 V6.5 L7 11.8 H0.8Z" fill="#fff"/><path d="M4 2.2 H10 M4 4.7 H10 M4 7.2 H9 M4 9.7 H7" stroke="#3f7cab" stroke-width="1.2"/><path d="M1.8 1.5 V11" stroke="#8fb2cf" stroke-width="0.8"/><path d="M6.3 10.8 L12.3 4.8 L14.6 7.1 L8.6 13.1 L6 13.6Z" fill="#fff"/><circle cx="7.6" cy="12" r="0.6" fill="#5d8db3"/></svg>
<div class="a abtn" style="left:1486px;top:725px;width:44px"></div>
<svg class="a" style="left:1499px;top:732px" width="16" height="13" viewBox="0 0 16 13"><path d="M0.3 0 H15.2 V10 H0.3 Z M2.3 1.3 V6.4 H13.2 V1.3Z" fill="#fff" fill-rule="evenodd"/><path d="M5 10 H10.6 V11.8 H5Z" fill="#fff"/></svg>
<div class="a cb" style="left:32px;top:760px"></div>
<div class="t sk" style="left:54px;top:760px;letter-spacing:-0.39px">Example with Proctor</div>
<div class="t sk" style="left:218px;top:760px;letter-spacing:0.25px">Araldo</div>
<div class="t sk" style="left:339px;top:760px;letter-spacing:0.25px">MacCarroll</div>
<div class="t" style="left:460px;top:760px;transform:scaleX(1.157);transform-origin:0 0;-webkit-text-stroke:0.2px #222">04/09/2017 08:17:22</div>
<div class="t sk" style="left:713px;top:760px;letter-spacing:-0.6px">In Progress</div>
<div class="a pbtn" style="left:838px;top:755px"></div>
<svg class="a" style="left:851px;top:762px" width="12" height="12" viewBox="0 0 12 12"><path d="M1 0.5 L11 6 L1 11.5Z" fill="#6f6f73"/></svg>
<div class="a pzbtn" style="left:912px;top:755px"></div>
<div class="a" style="left:925px;top:763px;width:5px;height:11px;background:#fff"></div><div class="a" style="left:932px;top:763px;width:5px;height:11px;background:#fff"></div>
<div class="t sk" style="left:967px;top:760px">02:10:10</div>
<div class="t sk" style="left:1221px;top:760px;letter-spacing:-0.15px">Section 1 - Item 4/10</div>
<div class="a abtn" style="left:1440px;top:755px;width:43px"></div>
<svg class="a" style="left:1453px;top:762px" width="16" height="14" viewBox="0 0 16 14"><path d="M0.8 0 H11 V6.5 L7 11.8 H0.8Z" fill="#fff"/><path d="M4 2.2 H10 M4 4.7 H10 M4 7.2 H9 M4 9.7 H7" stroke="#3f7cab" stroke-width="1.2"/><path d="M1.8 1.5 V11" stroke="#8fb2cf" stroke-width="0.8"/><path d="M6.3 10.8 L12.3 4.8 L14.6 7.1 L8.6 13.1 L6 13.6Z" fill="#fff"/><circle cx="7.6" cy="12" r="0.6" fill="#5d8db3"/></svg>
<div class="a abtn" style="left:1486px;top:755px;width:44px"></div>
<svg class="a" style="left:1499px;top:762px" width="16" height="13" viewBox="0 0 16 13"><path d="M0.3 0 H15.2 V10 H0.3 Z M2.3 1.3 V6.4 H13.2 V1.3Z" fill="#fff" fill-rule="evenodd"/><path d="M5 10 H10.6 V11.8 H5Z" fill="#fff"/></svg>
<div class="a cb" style="left:32px;top:790px"></div>
<div class="t sk" style="left:54px;top:790px;letter-spacing:-0.39px">Example with Proctor</div>
<div class="t sk" style="left:218px;top:790px;letter-spacing:0.25px">Shelli</div>
<div class="t sk" style="left:339px;top:790px;letter-spacing:0.25px">Huffey</div>
<div class="t" style="left:460px;top:790px;transform:scaleX(1.157);transform-origin:0 0;-webkit-text-stroke:0.2px #222">04/09/2017 08:28:10</div>
<div class="t sk" style="left:713px;top:790px;letter-spacing:-0.6px">In Progress</div>
<div class="a pbtn" style="left:838px;top:785px"></div>
<svg class="a" style="left:851px;top:792px" width="12" height="12" viewBox="0 0 12 12"><path d="M1 0.5 L11 6 L1 11.5Z" fill="#6f6f73"/></svg>
<div class="a pzbtn" style="left:912px;top:785px"></div>
<div class="a" style="left:925px;top:793px;width:5px;height:11px;background:#fff"></div><div class="a" style="left:932px;top:793px;width:5px;height:11px;background:#fff"></div>
<div class="t sk" style="left:967px;top:790px">02:10:10</div>
<div class="t sk" style="left:1221px;top:790px;letter-spacing:-0.15px">Section 1 - Item 1/10</div>
<div class="a abtn" style="left:1440px;top:785px;width:43px"></div>
<svg class="a" style="left:1453px;top:792px" width="16" height="14" viewBox="0 0 16 14"><path d="M0.8 0 H11 V6.5 L7 11.8 H0.8Z" fill="#fff"/><path d="M4 2.2 H10 M4 4.7 H10 M4 7.2 H9 M4 9.7 H7" stroke="#3f7cab" stroke-width="1.2"/><path d="M1.8 1.5 V11" stroke="#8fb2cf" stroke-width="0.8"/><path d="M6.3 10.8 L12.3 4.8 L14.6 7.1 L8.6 13.1 L6 13.6Z" fill="#fff"/><circle cx="7.6" cy="12" r="0.6" fill="#5d8db3"/></svg>
<div class="a abtn" style="left:1486px;top:785px;width:44px"></div>
<svg class="a" style="left:1499px;top:792px" width="16" height="13" viewBox="0 0 16 13"><path d="M0.3 0 H15.2 V10 H0.3 Z M2.3 1.3 V6.4 H13.2 V1.3Z" fill="#fff" fill-rule="evenodd"/><path d="M5 10 H10.6 V11.8 H5Z" fill="#fff"/></svg>
<div class="a cb" style="left:32px;top:820px"></div>
<div class="t sk" style="left:54px;top:820px;letter-spacing:-0.39px">Example with Proctor</div>
<div class="t sk" style="left:218px;top:820px;letter-spacing:0.25px">Andriette</div>
<div class="t sk" style="left:339px;top:820px;letter-spacing:0.25px">Pothecary</div>
<div class="t" style="left:460px;top:820px;transform:scaleX(1.157);transform-origin:0 0;-webkit-text-stroke:0.2px #222">04/09/2017 08:27:32</div>
<div class="t sk" style="left:713px;top:820px;letter-spacing:-0.6px">In Progress</div>
<div class="a pbtn" style="left:838px;top:815px"></div>
<svg class="a" style="left:851px;top:822px" width="12" height="12" viewBox="0 0 12 12"><path d="M1 0.5 L11 6 L1 11.5Z" fill="#6f6f73"/></svg>
<div class="a pzbtn" style="left:912px;top:815px"></div>
<div class="a" style="left:925px;top:823px;width:5px;height:11px;background:#fff"></div><div class="a" style="left:932px;top:823px;width:5px;height:11px;background:#fff"></div>
<div class="t sk" style="left:967px;top:820px">02:10:10</div>
<div class="t sk" style="left:1221px;top:820px;letter-spacing:-0.15px">Section 1 - Item 5/10</div>
<div class="a abtn" style="left:1440px;top:815px;width:43px"></div>
<svg class="a" style="left:1453px;top:822px" width="16" height="14" viewBox="0 0 16 14"><path d="M0.8 0 H11 V6.5 L7 11.8 H0.8Z" fill="#fff"/><path d="M4 2.2 H10 M4 4.7 H10 M4 7.2 H9 M4 9.7 H7" stroke="#3f7cab" stroke-width="1.2"/><path d="M1.8 1.5 V11" stroke="#8fb2cf" stroke-width="0.8"/><path d="M6.3 10.8 L12.3 4.8 L14.6 7.1 L8.6 13.1 L6 13.6Z" fill="#fff"/><circle cx="7.6" cy="12" r="0.6" fill="#5d8db3"/></svg>
<div class="a abtn" style="left:1486px;top:815px;width:44px"></div>
<svg class="a" style="left:1499px;top:822px" width="16" height="13" viewBox="0 0 16 13"><path d="M0.3 0 H15.2 V10 H0.3 Z M2.3 1.3 V6.4 H13.2 V1.3Z" fill="#fff" fill-rule="evenodd"/><path d="M5 10 H10.6 V11.8 H5Z" fill="#fff"/></svg>
<div class="a" style="left:462px;top:259px;width:237px;height:205px;background:#fff;border:1px solid #ddd;border-top:none"></div><div class="a" style="left:462px;top:259px;width:237px;height:33px;background:#a2a6ae"></div><div class="t" style="left:462px;width:237px;text-align:center;top:268px;font-weight:bold;color:#fff;font-size:13px;letter-spacing:0.15px">September 2017</div><svg class="a" style="left:477px;top:272px" width="8" height="10" viewBox="0 0 8 10"><path d="M6 0.8 L1.6 4.8 L6 8.8" fill="none" stroke="#fff" stroke-width="1.2"/></svg><svg class="a" style="left:676px;top:272px" width="8" height="10" viewBox="0 0 8 10"><path d="M1 0.8 L5.6 4.8 L1 8.8" fill="none" stroke="#fff" stroke-width="1.2"/></svg><div class="t" style="left:464px;width:31px;text-align:center;top:305px;font-weight:bold;font-size:12px;line-height:14px;color:#222">Su</div><div class="t" style="left:497px;width:33px;text-align:center;top:305px;font-weight:bold;font-size:12px;line-height:14px;color:#222">Mo</div><div class="t" style="left:532px;width:30px;text-align:center;top:305px;font-weight:bold;font-size:12px;line-height:14px;color:#222">Tu</div><div class="t" style="left:564px;width:34px;text-align:center;top:305px;font-weight:bold;font-size:12px;line-height:14px;color:#222">We</div><div class="t" style="left:600px;width:30px;text-align:center;top:305px;font-weight:bold;font-size:12px;line-height:14px;color:#222">Th</div><div class="t" style="left:632px;width:31px;text-align:center;top:305px;font-weight:bold;font-size:12px;line-height:14px;color:#222">Fr</div><div class="t" style="left:665px;width:31px;text-align:center;top:305px;font-weight:bold;font-size:12px;line-height:14px;color:#222">Sa</div><div class="a" style="left:632px;top:330px;width:31px;height:24px;background:#f0efed"></div><div class="t" style="left:632px;width:27px;text-align:right;top:335px;font-size:13px;color:#222;-webkit-text-stroke:0.3px #222">1</div><div class="a" style="left:665px;top:330px;width:31px;height:24px;background:#f0efed"></div><div class="t" style="left:665px;width:27px;text-align:right;top:335px;font-size:13px;color:#222;-webkit-text-stroke:0.3px #222">2</div><div class="a" style="left:464px;top:356px;width:31px;height:25px;background:#f0efed"></div><div class="t" style="left:464px;width:27px;text-align:right;top:361px;font-size:13px;color:#222;-webkit-text-stroke:0.3px #222">3</div><div class="a" style="left:497px;top:356px;width:33px;height:25px;background:#f0efed"></div><div class="t" style="left:497px;width:29px;text-align:right;top:361px;font-size:13px;color:#222;-webkit-text-stroke:0.3px #222">4</div><div class="a" style="left:532px;top:356px;width:30px;height:25px;background:#3a78a8"></div><div class="t" style="left:532px;width:26px;text-align:right;top:361px;font-size:13px;color:#fff;-webkit-text-stroke:0.3px #fff">5</div><div class="a" style="left:564px;top:356px;width:34px;height:25px;background:#f0efed"></div><div class="t" style="left:564px;width:30px;text-align:right;top:361px;font-size:13px;color:#222;-webkit-text-stroke:0.3px #222">6</div><div class="a" style="left:600px;top:356px;width:30px;height:25px;background:#f0efed"></div><div class="t" style="left:600px;width:26px;text-align:right;top:361px;font-size:13px;color:#222;-webkit-text-stroke:0.3px #222">7</div><div class="a" style="left:632px;top:356px;width:31px;height:25px;background:#f0efed"></div><div class="t" style="left:632px;width:27px;text-align:right;top:361px;font-size:13px;color:#222;-webkit-text-stroke:0.3px #222">8</div><div class="a" style="left:665px;top:356px;width:31px;height:25px;background:#f0efed"></div><div class="t" style="left:665px;width:27px;text-align:right;top:361px;font-size:13px;color:#222;-webkit-text-stroke:0.3px #222">9</div><div class="a" style="left:464px;top:383px;width:31px;height:25px;background:#f0efed"></div><div class="t" style="left:464px;width:27px;text-align:right;top:388px;font-size:13px;color:#222;-webkit-text-stroke:0.3px #222">10</div><div class="a" style="left:497px;top:383px;width:33px;height:25px;background:#f0efed"></div><div class="t" style="left:497px;width:29px;text-align:right;top:388px;font-size:13px;color:#222;-webkit-text-stroke:0.3px #222">11</div><div class="a" style="left:532px;top:383px;width:30px;height:25px;background:#f0efed"></div><div class="t" style="left:532px;width:26px;text-align:right;top:388px;font-size:13px;color:#222;-webkit-text-stroke:0.3px #222">12</div><div class="a" style="left:564px;top:383px;width:34px;height:25px;background:#f0efed"></div><div class="t" style="left:564px;width:30px;text-align:right;top:388px;font-size:13px;color:#222;-webkit-text-stroke:0.3px #222">13</div><div class="a" style="left:600px;top:383px;width:30px;height:25px;background:#f0efed"></div><div class="t" style="left:600px;width:26px;text-align:right;top:388px;font-size:13px;color:#222;-webkit-text-stroke:0.3px #222">14</div><div class="a" style="left:632px;top:383px;width:31px;height:25px;background:#f0efed"></div><div class="t" style="left:632px;width:27px;text-align:right;top:388px;font-size:13px;color:#222;-webkit-text-stroke:0.3px #222">15</div><div class="a" style="left:665px;top:383px;width:31px;height:25px;background:#f0efed"></div><div class="t" style="left:665px;width:27px;text-align:right;top:388px;font-size:13px;color:#222;-webkit-text-stroke:0.3px #222">16</div><div class="a" style="left:464px;top:410px;width:31px;height:24px;background:#f0efed"></div><div class="t" style="left:464px;width:27px;text-align:right;top:415px;font-size:13px;color:#222;-webkit-text-stroke:0.3px #222">17</div><div class="a" style="left:497px;top:410px;width:33px;height:24px;background:#f0efed"></div><div class="t" style="left:497px;width:29px;text-align:right;top:415px;font-size:13px;color:#222;-webkit-text-stroke:0.3px #222">18</div><div class="a" style="left:532px;top:410px;width:30px;height:24px;background:#f0efed"></div><div class="t" style="left:532px;width:26px;text-align:right;top:415px;font-size:13px;color:#222;-webkit-text-stroke:0.3px #222">19</div><div class="a" style="left:564px;top:410px;width:34px;height:24px;background:#f0efed"></div><div class="t" style="left:564px;width:30px;text-align:right;top:415px;font-size:13px;color:#222;-webkit-text-stroke:0.3px #222">20</div><div class="a" style="left:600px;top:410px;width:30px;height:24px;background:#f0efed"></div><div class="t" style="left:600px;width:26px;text-align:right;top:415px;font-size:13px;color:#222;-webkit-text-stroke:0.3px #222">21</div><div class="a" style="left:632px;top:410px;width:31px;height:24px;background:#f0efed"></div><div class="t" style="left:632px;width:27px;text-align:right;top:415px;font-size:13px;color:#222;-webkit-text-stroke:0.3px #222">22</div><div class="a" style="left:665px;top:410px;width:31px;height:24px;background:#f0efed"></div><div class="t" style="left:665px;width:27px;text-align:right;top:415px;font-size:13px;color:#222;-webkit-text-stroke:0.3px #222">23</div><div class="a" style="left:464px;top:436px;width:31px;height:25px;background:#f0efed"></div><div class="t" style="left:464px;width:27px;text-align:right;top:441px;font-size:13px;color:#222;-webkit-text-stroke:0.3px #222">24</div><div class="a" style="left:497px;top:436px;width:33px;height:25px;background:#f0efed"></div><div class="t" style="left:497px;width:29px;text-align:right;top:441px;font-size:13px;color:#222;-webkit-text-stroke:0.3px #222">25</div><div class="a" style="left:532px;top:436px;width:30px;height:25px;background:#f0efed"></div><div class="t" style="left:532px;width:26px;text-align:right;top:441px;font-size:13px;color:#222;-webkit-text-stroke:0.3px #222">26</div><div class="a" style="left:564px;top:436px;width:34px;height:25px;background:#f0efed"></div><div class="t" style="left:564px;width:30px;text-align:right;top:441px;font-size:13px;color:#222;-webkit-text-stroke:0.3px #222">27</div><div class="a" style="left:600px;top:436px;width:30px;height:25px;background:#f0efed"></div><div class="t" style="left:600px;width:26px;text-align:right;top:441px;font-size:13px;color:#222;-webkit-text-stroke:0.3px #222">28</div><div class="a" style="left:632px;top:436px;width:31px;height:25px;background:#f0efed"></div><div class="t" style="left:632px;width:27px;text-align:right;top:441px;font-size:13px;color:#222;-webkit-text-stroke:0.3px #222">29</div><div class="a" style="left:665px;top:436px;width:31px;height:25px;background:#f0efed"></div><div class="t" style="left:665px;width:27px;text-align:right;top:441px;font-size:13px;color:#222;-webkit-text-stroke:0.3px #222">30</div>
<div class="a" style="left:686px;top:207px;width:24px;height:6px;background:#fff"></div>
<div class="a" style="left:686px;top:512px;width:10px;height:5px;background:#f8f7f5"></div><div class="a" style="left:686px;top:517px;width:10px;height:3px;background:#fff"></div>
<div class="t" style="left:20px;top:854px;font-size:13px;letter-spacing:0.25px">Page <b>1</b> of 1</div>
<div class="a" style="left:1400px;top:852px;width:102px;height:25px;background:#d3d6da;border-radius:3px"></div>
<svg class="a" style="left:1414px;top:858px" width="13" height="13" viewBox="0 0 13 13"><path d="M6.2 1 L0.6 6.5 L6.2 12Z M12 1 L6.4 6.5 L12 12Z" fill="#777a80"/></svg>
<div class="t" style="left:1436px;top:857px;color:#777;font-size:13px;line-height:15px;letter-spacing:0.35px;-webkit-text-stroke:0.2px #777">Previous</div>
<div class="a" style="left:1505px;top:852px;width:79px;height:25px;background:#d3d6da;border-radius:3px"></div>
<div class="t" style="left:1520px;top:857px;color:#777;font-size:13px;line-height:15px;letter-spacing:0.4px;-webkit-text-stroke:0.2px #777">Next</div>
<svg class="a" style="left:1555px;top:858px" width="13" height="13" viewBox="0 0 13 13"><path d="M0.6 1 L6.2 6.5 L0.6 12Z M6.4 1 L12 6.5 L6.4 12Z" fill="#777a80"/></svg>
<div class="a ftr"></div>
<div class="t" style="left:10px;top:902px;font-size:11px;line-height:13px;color:#eee;letter-spacing:-0.28px;-webkit-text-stroke:0.2px #eee">© 2013 - 2017 - 3.2.0 - <u>Open Assessment Technologies S.A.</u> - All rights reserved.</div>
</body></html>
